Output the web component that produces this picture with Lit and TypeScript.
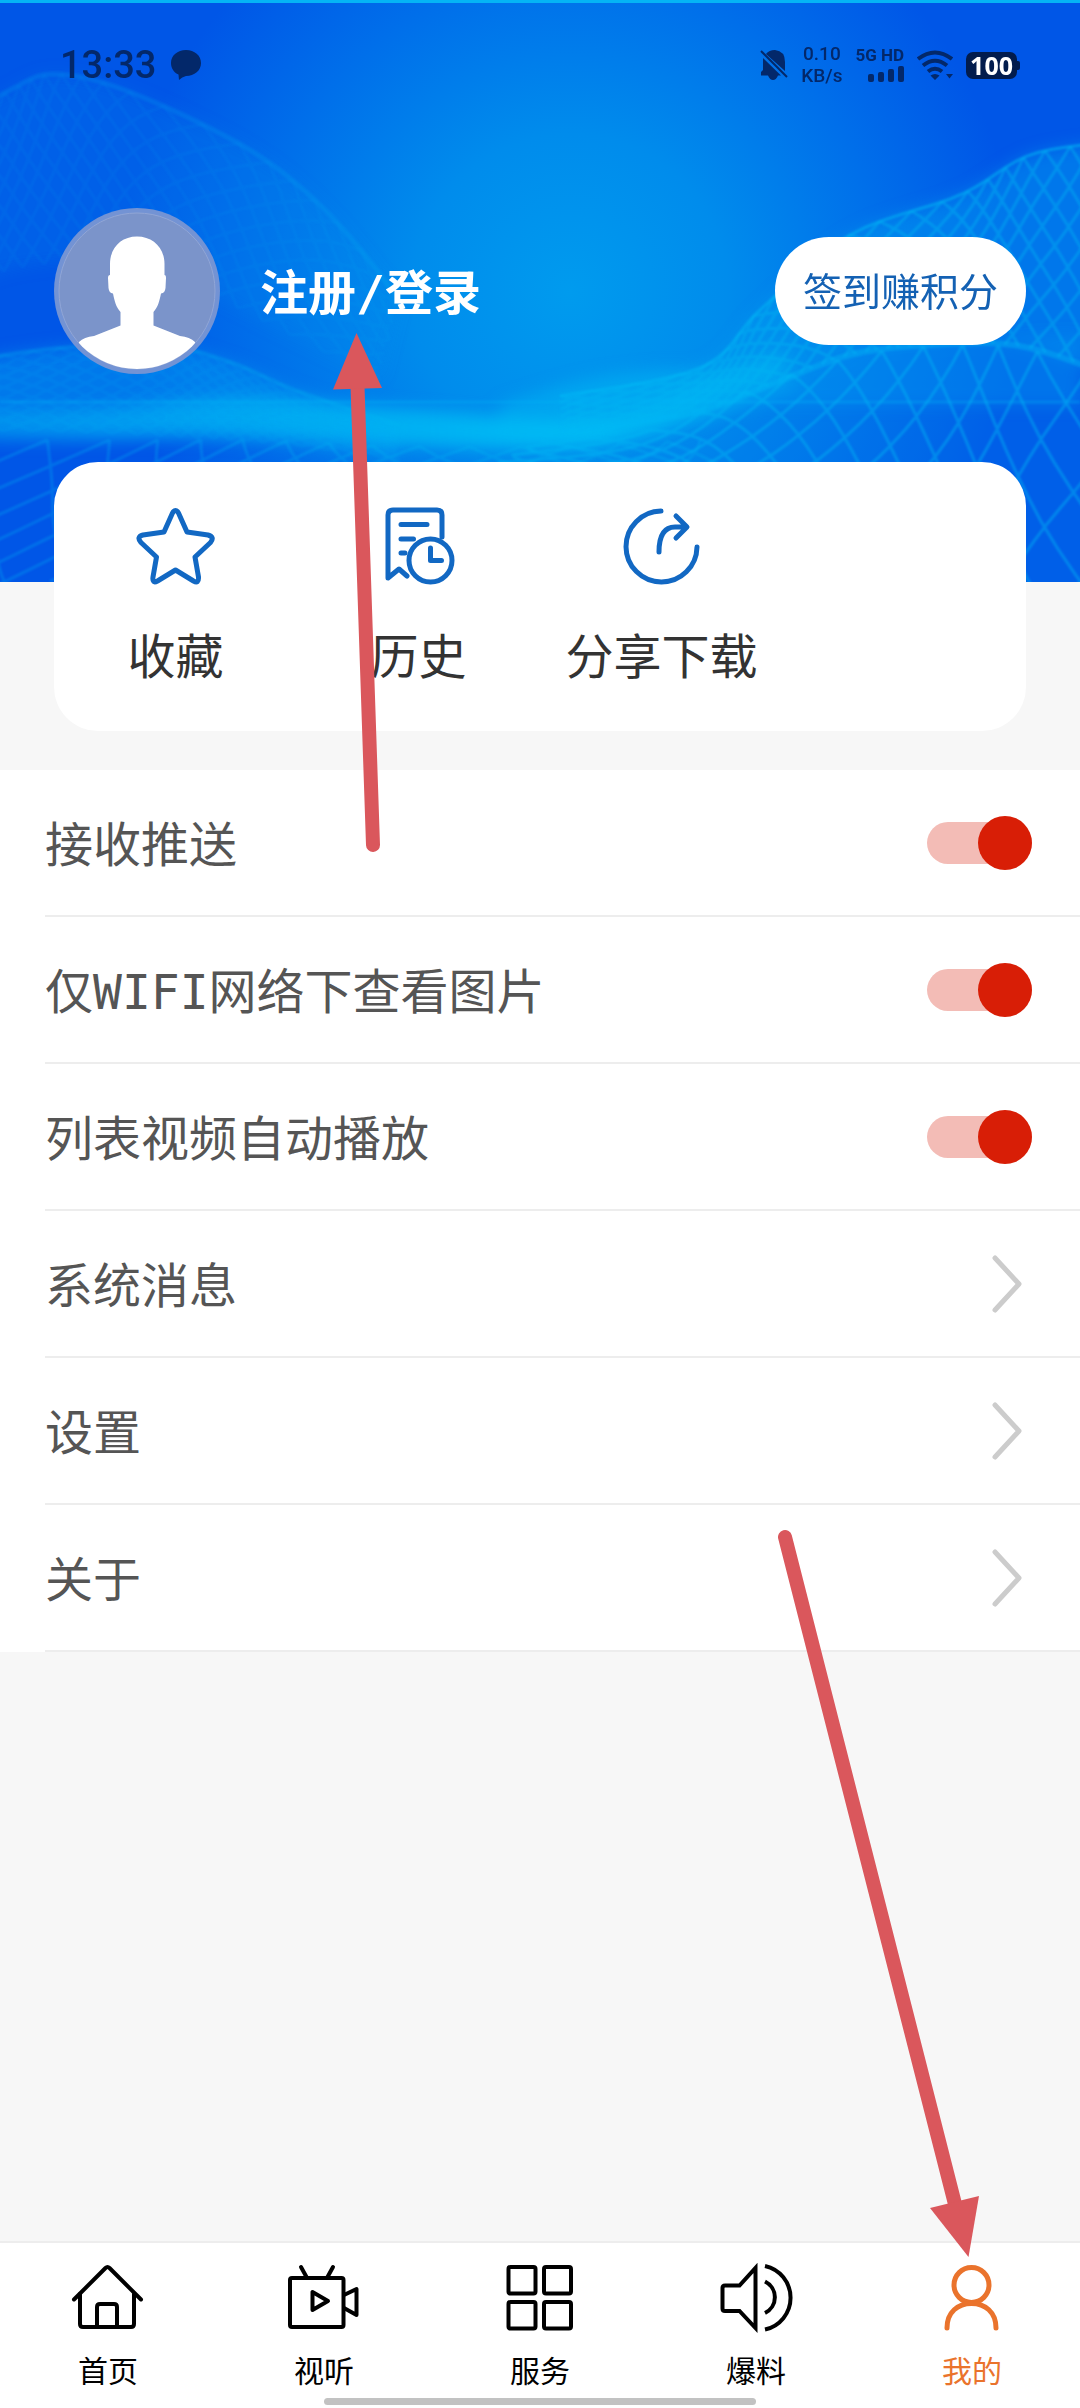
import { LitElement, html, svg, css } from "lit";
import { customElement, state } from "lit/decorators.js";

type Pt = [number, number];

/* ---------- hero mesh geometry ---------- */

/** Point at parameter t (0..1) on a Catmull-Rom curve through pts. */
function at(pts: Pt[], t: number): Pt {
  const n = pts.length - 1;
  const s = Math.min(Math.max(t, 0), 1) * n;
  const i = Math.min(Math.floor(s), n - 1);
  const u = s - i;
  const p0 = pts[Math.max(i - 1, 0)];
  const p1 = pts[i];
  const p2 = pts[i + 1];
  const p3 = pts[Math.min(i + 2, n)];
  const f = (a: number, b: number, c: number, d: number) =>
    0.5 * (2 * b + (c - a) * u + (2 * a - 5 * b + 4 * c - d) * u * u + (3 * b - a - 3 * c + d) * u * u * u);
  return [f(p0[0], p1[0], p2[0], p3[0]), f(p0[1], p1[1], p2[1], p3[1])];
}

function toPath(points: Pt[]): string {
  return points.map((p, i) => (i ? "L" : "M") + p[0].toFixed(1) + " " + p[1].toFixed(1)).join("");
}

/** A ribbon between two curves, woven from two families of diagonal threads. */
function weave(a: Pt[], b: Pt[], threads: number, slant: number): string {
  let d = "";
  for (let k = -threads; k <= threads * 2; k++) {
    for (const dir of [1, -1]) {
      const line: Pt[] = [];
      for (let j = 0; j <= 16; j++) {
        const v = j / 16;
        const t = k / threads + dir * slant * v;
        if (t < 0 || t > 1) continue;
        const p = at(a, t);
        const q = at(b, t);
        line.push([p[0] + (q[0] - p[0]) * v, p[1] + (q[1] - p[1]) * v]);
      }
      if (line.length > 1) d += toPath(line);
    }
  }
  return d;
}

function ribbon(a: Pt[], b: Pt[]): string {
  const fwd: Pt[] = [];
  const back: Pt[] = [];
  for (let i = 0; i <= 40; i++) {
    fwd.push(at(a, i / 40));
    back.unshift(at(b, i / 40));
  }
  return toPath(fwd.concat(back)) + "Z";
}

function curve(a: Pt[]): string {
  const pts: Pt[] = [];
  for (let i = 0; i <= 40; i++) pts.push(at(a, i / 40));
  return toPath(pts);
}

const leftTop: Pt[] = [[-40, 120], [10, 90], [55, 74], [130, 92], [250, 150], [330, 215], [400, 300]];
const leftLow: Pt[] = [[-40, 290], [10, 270], [80, 262], [140, 270], [200, 290], [280, 330], [380, 380]];
const rightTop: Pt[] = [[560, 396], [700, 368], [760, 310], [850, 235], [960, 195], [1030, 155], [1110, 142]];
const rightLow: Pt[] = [[560, 432], [690, 414], [770, 385], [850, 355], [930, 345], [1020, 346], [1110, 375]];
const fieldTop: Pt[] = [[540, 440], [660, 428], [760, 385], [860, 355], [950, 345], [1030, 350], [1130, 380]];
const fieldLow: Pt[] = [[480, 470], [620, 490], [720, 520], [820, 570], [930, 640], [1040, 690], [1200, 740]];
const bandTop: Pt[] = [[-20, 412], [100, 408], [220, 398], [320, 402], [420, 410], [560, 420], [640, 410], [720, 376], [790, 350]];
const bandLow: Pt[] = [[-20, 440], [100, 440], [220, 436], [320, 440], [420, 446], [560, 448], [640, 438], [720, 415], [800, 390]];
const hazeTop: Pt[] = [[500, 404], [580, 380], [650, 370], [720, 368], [780, 350]];
const hazeLow: Pt[] = [[500, 430], [580, 425], [650, 420], [720, 400], [780, 380]];
const lowLeftTop: Pt[] = [[-40, 362], [60, 348], [160, 345], [230, 362], [300, 392], [400, 425]];
const lowLeftLow: Pt[] = [[-40, 430], [60, 432], [160, 436], [230, 440], [300, 446], [400, 460]];
const floorTop: Pt[] = [[-60, 440], [120, 440], [260, 440], [400, 446], [560, 446], [700, 440]];
const floorLow: Pt[] = [[-260, 620], [-60, 600], [160, 560], [360, 520], [560, 510], [760, 520]];

const heroArt = html`
  <svg class="hero-art" viewBox="0 0 1080 582" preserveAspectRatio="xMidYMid slice" aria-hidden="true">
    <defs>
      <radialGradient id="glow" gradientUnits="userSpaceOnUse" cx="570" cy="292" r="450">
        <stop offset="0" stop-color="#009bee" />
        <stop offset="0.35" stop-color="#008cec" />
        <stop offset="0.7" stop-color="#006fea" />
        <stop offset="1" stop-color="#0056e7" />
      </radialGradient>
      <filter id="soft" x="-10%" y="-40%" width="120%" height="180%">
        <feGaussianBlur stdDeviation="8" />
      </filter>
      <filter id="fine"><feGaussianBlur stdDeviation="1" /></filter>
      <linearGradient id="fade" x1="0" x2="1" y1="0" y2="0">
        <stop offset="0" stop-color="#00b4f2" stop-opacity="0.45" />
        <stop offset="0.4" stop-color="#00b4f2" stop-opacity="0.8" />
        <stop offset="0.75" stop-color="#00bcf4" stop-opacity="1" />
        <stop offset="1" stop-color="#00b4f2" stop-opacity="0.3" />
      </linearGradient>
    </defs>
    <rect width="1080" height="582" fill="url(#glow)" />
    <g filter="url(#soft)">
      <path d=${ribbon(leftTop, leftLow)} fill="#0090ee" opacity="0.18" />
      <path d=${ribbon(lowLeftTop, lowLeftLow)} fill="#009cf0" opacity="0.5" />
      <path d=${ribbon(rightTop, rightLow)} fill="#00a4f0" opacity="0.42" />
      <path d=${ribbon(fieldTop, fieldLow)} fill="#0090ee" opacity="0.16" />
      <path d=${ribbon(hazeTop, hazeLow)} fill="#00b0f2" opacity="0.6" />
      <path d=${ribbon(bandTop, bandLow)} fill="url(#fade)" />
      <path d="M1080 335 880 345 700 405H1080Z" fill="#009cf0" opacity="0.35" />
    </g>
    <g fill="none" stroke="#00b6f4" filter="url(#fine)">
      <path d=${weave(leftTop, leftLow, 20, 0.3)} stroke-width="3" opacity="0.09" />
      <path d=${weave(lowLeftTop, lowLeftLow, 20, 0.35)} stroke-width="3" opacity="0.12" />
      <path d=${weave(rightTop, rightLow, 22, 0.24)} stroke-width="3" opacity="0.42" />
      <path d=${weave(fieldTop, fieldLow, 13, 0.3)} stroke-width="3" opacity="0.45" />
      <path d=${weave(floorTop, floorLow, 16, 0.2)} stroke-width="3" opacity="0.28" />
      <path d=${curve(rightTop)} stroke-width="3" opacity="0.55" />
      <path d=${curve(rightLow)} stroke-width="6" opacity="0.4" />
      <path d=${curve(leftTop)} stroke-width="5" opacity="0.18" />
      <path d=${curve(lowLeftTop)} stroke-width="4" opacity="0.25" />
      <path d="M0 402H1080" stroke-width="3" opacity="0.3" />
    </g>
  </svg>
`;

/* ---------- icons ---------- */

const starIcon = svg`<path d="M28 27 36.500 8Q39.500 3 42.500 8L51 27 72 30Q79 32 74.500 37.500L59 52 62.500 72Q63 79 57.500 76L39.500 65 21.500 76Q16 79 17 72L20.500 52 5 37.500Q0 32 7 30Z"/>`;

const historyIcon = svg`
  <path d="M63 32V10Q63 5 58 5H14Q9 5 9 10V73L20 64 28 71"/>
  <path d="M22 19.500H48M22 34H34.500M22 48H26"/>
  <circle cx="51.500" cy="55.500" r="21.500"/>
  <path d="M51.500 43V55.500H62.500"/>`;

const shareIcon = svg`
  <path d="M39 6A35.500 35.500 0 1 0 75 42"/>
  <path d="M37 47C37 30 43 22 53 22H64M54 11 65 22 54 33"/>`;

const homeIcon = svg`<g stroke-width="4">
  <path d="M6 41.500 37.500 10Q39.500 8 41.500 10L73 41.500"/>
  <path d="M12 36V66Q12 69 15 69H63Q66 69 66 66V36"/>
  <path d="M29 69V49Q29 46 32 46H46Q49 46 49 49V69"/></g>`;

const tvIcon = svg`<g stroke-width="4">
  <rect x="6" y="20" width="53.500" height="49" rx="2"/>
  <path d="M17 9 22.500 19M49 9 43.500 19"/>
  <path d="M28.500 34V52L44 43Z"/>
  <path d="M60 37 72.500 31V57L60 50"/></g>`;

const gridIcon = svg`<g stroke-width="4">
  <rect x="8.500" y="9" width="27" height="26.500" rx="2"/>
  <rect x="44" y="9" width="27" height="26.500" rx="2"/>
  <rect x="8.500" y="44" width="27" height="26.500" rx="2"/>
  <rect x="44" y="44" width="27" height="26.500" rx="2"/></g>`;

const speakerIcon = svg`<g stroke-width="4" stroke-linecap="butt" stroke-linejoin="miter">
  <path d="M39.500 10V70L23.500 53H9Q6.500 53 6.500 50.500V30Q6.500 27.500 9 27.500H23.500Z"/>
  <path d="M49 23.500A17.500 17.500 0 0 1 49 55"/>
  <path d="M49 8A32.500 32.500 0 0 1 49 71.500"/></g>`;

const personIcon = svg`<g stroke-width="5">
  <circle cx="39.500" cy="27" r="17.500"/>
  <path d="M15 70C15 54 26 45.500 39.500 45.500S64 54 64 70"/></g>`;

const icon = (shape: unknown) => html`<svg class="icon" viewBox="0 0 80 80" aria-hidden="true">${shape}</svg>`;

const shortcuts = [
  { label: "收藏", shape: starIcon },
  { label: "历史", shape: historyIcon },
  { label: "分享下载", shape: shareIcon },
];

const tabs = [
  { label: "首页", shape: homeIcon },
  { label: "视听", shape: tvIcon },
  { label: "服务", shape: gridIcon },
  { label: "爆料", shape: speakerIcon },
  { label: "我的", shape: personIcon },
];

const links = ["系统消息", "设置", "关于"];

@customElement("status-bar")
class StatusBar extends LitElement {
  static styles = css`
    :host {
      display: flex;
      align-items: center;
      justify-content: space-between;
      height: 42px;
      padding: 44px 60px 0;
      color: #03286a;
      font-family: Roboto, "Noto Sans", sans-serif;
      font-weight: 500;
    }
    .side {
      display: flex;
      align-items: center;
    }
    .left {
      gap: 15px;
    }
    .right {
      gap: 13px;
    }
    .time {
      font-size: 38px;
      line-height: 42px;
    }
    .rate {
      display: flex;
      flex-direction: column;
      align-items: center;
      font-size: 19px;
      line-height: 22px;
    }
    .cell {
      display: flex;
      flex-direction: column;
      align-items: flex-end;
      gap: 4px;
      font-size: 17px;
      line-height: 14px;
      font-weight: 700;
    }
    .battery {
      display: flex;
      align-items: center;
    }
    .level {
      padding: 0 4px;
      border-radius: 7px;
      background: #021c4d;
      color: #fff;
      font-family: "Noto Sans", sans-serif;
      font-size: 25px;
      line-height: 27px;
      font-weight: 700;
    }
    .tip {
      width: 3px;
      height: 9px;
      border-radius: 0 2px 2px 0;
      background: #021c4d;
    }
    svg {
      display: block;
      fill: currentColor;
    }
  `;

  render() {
    return html`
      <div class="side left">
        <span class="time">13:33</span>
        <svg width="30" height="30" viewBox="0 0 30 30" aria-hidden="true">
          <path d="M15 0C23.500 0 30 5.500 30 13S23.500 26 15 26Q11 27 8 30L7.500 24.500C3 22.500 0 18.500 0 13 0 5.500 6.500 0 15 0Z" />
        </svg>
      </div>
      <div class="side right">
        <svg width="28" height="32" viewBox="0 0 28 32" aria-hidden="true">
          <path d="M6 5Q9 1 15 1Q25 2 25 13V22ZM3 9 21 26.500H18Q16 31 13 31T8 26.500H1V23L3 21Z" />
          <path d="M1 2 27 28" stroke="currentColor" stroke-width="2" />
        </svg>
        <span class="rate"><span>0.10</span><span>KB/s</span></span>
        <span class="cell">
          <span>5G HD</span>
          <svg width="36" height="16" viewBox="0 0 36 16" aria-hidden="true">
            <rect x="0" y="8" width="6" height="8" rx="2" />
            <rect x="10" y="6" width="6" height="10" rx="2" />
            <rect x="20" y="3" width="6" height="13" rx="2" />
            <rect x="30" y="0" width="6" height="16" rx="2" />
          </svg>
        </span>
        <svg width="36" height="30" viewBox="0 0 36 30" aria-hidden="true">
          <g fill="none" stroke="currentColor" stroke-width="4">
            <path d="M1 9Q18-4 35 9" />
            <path d="M6 15.500Q18 6 30 15.500" />
            <path d="M11 21.500Q18 16 25 21.500" />
          </g>
          <path d="M13.500 25.500Q18 22.500 22.500 25.500L18 30ZM29 24H36L32.500 28.500Z" />
        </svg>
        <span class="battery"><span class="level">100</span><span class="tip"></span></span>
      </div>
    `;
  }
}

@customElement("app-root")
class AppRoot extends LitElement {
  @state() private toggles = [
    { label: "接收推送", on: true },
    { label: "仅WIFI网络下查看图片", on: true },
    { label: "列表视频自动播放", on: true },
  ];
  @state() private active = 4;

  static styles = css`
    :host {
      display: block;
      font-family: "DejaVu Sans Mono", "Noto Sans CJK SC", sans-serif;
    }
    .page {
      position: relative;
      display: flex;
      flex-direction: column;
      min-height: 100vh;
      background: #f7f7f7;
    }
    button {
      margin: 0;
      padding: 0;
      border: 0;
      background: none;
      color: inherit;
      font: inherit;
      cursor: pointer;
    }
    a {
      color: inherit;
      text-decoration: none;
    }
    .icon {
      display: block;
      width: 80px;
      height: 80px;
      fill: none;
      stroke: currentColor;
      stroke-width: 5;
      stroke-linecap: round;
      stroke-linejoin: round;
    }

    .hero {
      position: relative;
      padding-bottom: 208px;
      background: #0057e7;
    }
    .hero-art {
      position: absolute;
      inset: 0;
      width: 100%;
      height: 100%;
    }
    .hero::after {
      content: "";
      position: absolute;
      inset: 0 0 auto;
      height: 3px;
      background: #05b4f5;
    }
    .hero-body {
      position: relative;
    }
    .profile {
      display: flex;
      align-items: center;
      gap: 40px;
      padding: 122px 54px 0;
    }
    .avatar {
      display: block;
      width: 166px;
      height: 166px;
    }
    .login {
      padding-top: 4px;
      color: #fff;
      font-size: 48px;
      line-height: 60px;
      font-weight: 700;
    }
    .checkin {
      margin-left: auto;
      padding: 26px 28px 22px;
      border-radius: 54px;
      background: #fff;
      color: #1461b3;
      font-size: 39px;
      line-height: 60px;
    }

    .card {
      position: relative;
      display: grid;
      grid-template-columns: repeat(4, 1fr);
      margin: -120px 54px 0;
      padding: 43px 0 44px;
      border-radius: 44px;
      background: #fff;
    }
    .shortcut {
      display: flex;
      flex-direction: column;
      align-items: center;
      gap: 42px;
      color: #333;
      font-size: 48px;
      line-height: 60px;
      white-space: nowrap;
    }
    .shortcut .icon {
      color: #1268c3;
    }

    .list {
      margin: 39px 0 0;
      padding: 0;
      background: #fff;
      list-style: none;
    }
    .item {
      padding-left: 45px;
    }
    .row {
      display: flex;
      align-items: center;
      justify-content: space-between;
      height: 145px;
      padding-right: 48px;
      border-bottom: 2px solid #ededed;
      color: #555;
      font-size: 48px;
      line-height: 60px;
      cursor: pointer;
    }
    .row span {
      padding-top: 4px;
    }
    .switch {
      appearance: none;
      display: grid;
      align-items: center;
      width: 105px;
      height: 54px;
      margin: 0;
      cursor: pointer;
    }
    .switch::before,
    .switch::after {
      content: "";
      grid-area: 1 / 1;
    }
    .switch::before {
      height: 42px;
      border-radius: 21px;
      background: #ddd;
    }
    .switch::after {
      width: 54px;
      height: 54px;
      border-radius: 50%;
      background: #aaa;
    }
    .switch:checked::before {
      background: #f3bcb6;
    }
    .switch:checked::after {
      justify-self: end;
      background: #d81e06;
    }
    .chevron {
      width: 40px;
      height: 60px;
      fill: none;
      stroke: #ccc;
      stroke-width: 5;
      stroke-linecap: round;
      stroke-linejoin: round;
    }

    .tabbar {
      margin-top: auto;
      padding-bottom: 3px;
      border-top: 2px solid #ededed;
      background: #fff;
    }
    .tabs {
      display: grid;
      grid-template-columns: repeat(5, 1fr);
      padding: 15px 0 8px;
    }
    .tab {
      display: flex;
      flex-direction: column;
      align-items: center;
      gap: 16px;
      color: #000;
      font-size: 30px;
      line-height: 36px;
    }
    .tab.active {
      color: #ea732c;
    }
    .gesture {
      width: 40%;
      height: 7px;
      margin: 0 auto;
      border-radius: 4px;
      background: #c2c2c2;
    }

    .marks {
      position: absolute;
      inset: 0;
      width: 100%;
      height: 100%;
      pointer-events: none;
      fill: #da575c;
      stroke: #da575c;
    }
  `;

  private flip(index: number) {
    this.toggles = this.toggles.map((t, i) => (i === index ? { ...t, on: !t.on } : t));
  }

  render() {
    return html`
      <div class="page">
        <header class="hero">
          ${heroArt}
          <div class="hero-body">
            <status-bar></status-bar>
            <div class="profile">
              <svg class="avatar" viewBox="0 0 166 166" aria-hidden="true">
                <defs>
                  <clipPath id="disc"><circle cx="83" cy="83" r="78" /></clipPath>
                </defs>
                <circle cx="83" cy="83" r="83" fill="#7393d4" />
                <circle cx="83" cy="83" r="78" fill="#7b94ca" stroke="#91a6d6" />
                <path
                  clip-path="url(#disc)"
                  fill="#fff"
                  d="M83 28.500C99 28.500 110.500 40 110.500 56V67Q112 67 112 70L111.500 80Q111 85 107 85.500C105.500 93 104 99 99.500 104V117.500L126 128Q136 129 141 134V166H25V134Q30 129 40 128L66.500 117.500V104C62 99 60.500 93 59 85.500Q55 85 54.500 80L54 70Q54 67 56 67V56C56 40 67 28.500 83 28.500Z"
                />
              </svg>
              <button class="login">注册/登录</button>
              <button class="checkin">签到赚积分</button>
            </div>
          </div>
        </header>

        <section class="card">
          ${shortcuts.map((s) => html`<button class="shortcut">${icon(s.shape)}<span>${s.label}</span></button>`)}
        </section>

        <ul class="list">
          ${this.toggles.map(
            (t, i) => html`
              <li class="item">
                <label class="row">
                  <span>${t.label}</span>
                  <input class="switch" type="checkbox" role="switch" .checked=${t.on} @change=${() => this.flip(i)} />
                </label>
              </li>
            `
          )}
          ${links.map(
            (label) => html`
              <li class="item">
                <a class="row" href="#">
                  <span>${label}</span>
                  <svg class="chevron" viewBox="0 0 40 60" aria-hidden="true"><path d="M3 4 27 30 3 56" /></svg>
                </a>
              </li>
            `
          )}
        </ul>

        <footer class="tabbar">
          <nav class="tabs">
            ${tabs.map(
              (t, i) => html`
                <button class="tab ${i === this.active ? "active" : ""}" @click=${() => (this.active = i)}>
                  ${icon(t.shape)}<span>${t.label}</span>
                </button>
              `
            )}
          </nav>
          <div class="gesture"></div>
        </footer>

        <svg class="marks" viewBox="0 0 1080 2408" aria-hidden="true">
          <path d="M357.500 386 373 845" stroke-width="14" stroke-linecap="round" />
          <path d="M356.500 333 382 388 333 389.500Z" stroke="none" />
          <path d="M785 1537 955 2204" stroke-width="14" stroke-linecap="round" />
          <path d="M968.500 2257 930 2208 979 2196Z" stroke="none" />
        </svg>
      </div>
    `;
  }
}
